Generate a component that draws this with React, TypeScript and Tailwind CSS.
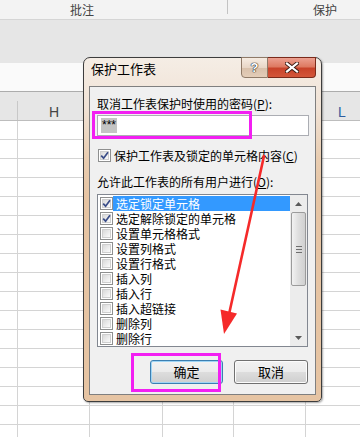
import React from "react";

function Cb({ checked }: { checked?: boolean }) {
  return (
    <span className="relative flex h-[13px] w-[13px] shrink-0 items-center justify-center border border-[#8e8f8f] bg-white">
      <span className="absolute inset-[1px] border border-[#cfcfcf] bg-[linear-gradient(135deg,#d9d9d9,#fbfbfb)]" />
      {checked && (
        <svg className="relative" width="9" height="9" viewBox="0 0 9 9">
          <path d="M1.2 4.6 L3.6 7.2 L8 1.2" stroke="#3a4d88" strokeWidth="1.7" fill="none" />
        </svg>
      )}
    </span>
  );
}

const items = [
  { t: "选定锁定单元格", c: true, s: true },
  { t: "选定解除锁定的单元格", c: true },
  { t: "设置单元格格式" },
  { t: "设置列格式" },
  { t: "设置行格式" },
  { t: "插入列" },
  { t: "插入行" },
  { t: "插入超链接" },
  { t: "删除列" },
  { t: "删除行" },
];

const rows = Array.from({ length: 17 }, (_, i) => i);

export default function App() {
  return (
    <div className='relative h-[437px] w-[360px] overflow-hidden bg-white font-[family-name:"Noto_Sans_CJK_SC",sans-serif] text-[12px] text-black'>
      {/* ribbon group labels */}
      <div className="flex h-[20px] border-b border-[#d5d5d5] bg-[#f3f3f3] text-[#444]">
        <div className="w-[227px] pl-[70px] leading-[19px]">批注</div>
        <div className="h-[14px] w-px bg-[#c3c3c3]" />
        <div className="pl-[85px] leading-[19px]">保护</div>
      </div>
      <div className="h-[43px] bg-[#e6e6e6]" />
      <div className="h-[29px] border-b border-[#acacac] bg-[#fafafa]" />
      {/* column headers */}
      <div className="grid h-[29px] grid-cols-[18px_72px_73px_71px_72px_1fr] border-b border-[#bdbdbd] bg-[#e6e6e6] font-[family-name:'Liberation_Sans',sans-serif] text-[14px] text-[#444]">
        <div className="mt-[9px] border-r border-[#c8c8c8]" />
        <div className="flex items-center justify-center pt-[12px] leading-[14px]">H</div>
        <div />
        <div />
        <div />
        <div className="flex w-[72px] items-center justify-center pt-[12px] leading-[14px] text-[#2f5d9e]">L</div>
      </div>
      {/* grid */}
      <div className="grid grid-cols-[18px_72px_73px_71px_72px_1fr]">
        {rows.map((r) => (
          <React.Fragment key={r}>
            <div className="h-[19px] border-b border-r border-[#d4d4d4]" />
            <div className="h-[19px] border-b border-r border-[#d4d4d4]" />
            <div className="h-[19px] border-b border-r border-[#d4d4d4]" />
            <div className="h-[19px] border-b border-r border-[#d4d4d4]" />
            <div className="h-[19px] border-b border-r border-[#d4d4d4]" />
            <div className="h-[19px] border-b border-[#d4d4d4]" />
          </React.Fragment>
        ))}
      </div>

      {/* dialog window */}
      <div className="absolute left-[83px] top-[57px] flex h-[345px] w-[239px] flex-col rounded-t-[7px] rounded-b-[5px] border border-[#3d3d3d] bg-[linear-gradient(to_bottom,#f5ede5_0px,#f0e2d5_50px,#e9cdb1_100px,#e6c4a3_140px,#e6c4a3_100%)] px-[5px] pb-[6px] shadow-[1px_1px_2px_rgba(0,0,0,0.35)]">
        <div className="flex h-[28px] shrink-0 items-start">
          <div className="pl-[2px] pt-[3px] text-[13px] leading-[16px]">保护工作表</div>
          <div className="-mt-px ml-auto flex">
            <div className="flex h-[21px] w-[27px] items-center justify-center rounded-bl-[4px] border border-[#8f7a68] bg-[linear-gradient(to_bottom,#f6ece2,#e8d6c6_50%,#d8c0aa_51%,#e4cdb8)] font-[family-name:'Liberation_Sans',sans-serif] text-[13px] font-bold text-white [text-shadow:0_0_1px_#222,0_0_1px_#222,0_0_1px_#222]">
              ?
            </div>
            <div className="flex h-[21px] w-[48px] items-center justify-center rounded-br-[4px] border border-l-0 border-[#7a2a1a] bg-[linear-gradient(to_bottom,#eca090,#de7a62_45%,#c8432a_55%,#d3563a)]">
              <svg width="14" height="11" viewBox="0 0 14 11">
                <path d="M2 1.5 L12 9.5 M12 1.5 L2 9.5" stroke="#3a1a12" strokeWidth="4" strokeLinecap="square" />
                <path d="M2 1.5 L12 9.5 M12 1.5 L2 9.5" stroke="#ffffff" strokeWidth="2.2" strokeLinecap="square" />
              </svg>
            </div>
          </div>
        </div>

        {/* content panel */}
        <div className="flex flex-1 flex-col border border-[#7f7f7f] bg-[#f0f0f0] pl-[7px] pr-[7px]">
          <div className="mt-[9px] leading-[15px]">
            取消工作表保护时使用的密码(<span className="underline">P</span>):
          </div>
          <div className="mt-[4px] flex h-[21px] w-[212px] items-center border border-[#abadb3] bg-white pl-[3px]">
            <span className="bg-[#c4c4c4] px-[1px] font-[family-name:'Liberation_Sans',sans-serif] text-[12px] leading-[15px]">***</span>
          </div>
          <div className="mt-[11px] flex h-[16px] items-center gap-[3px] pl-[1px]">
            <Cb checked />
            <span className="leading-[15px]">
              保护工作表及锁定的单元格内容(<span className="underline">C</span>)
            </span>
          </div>
          <div className="mt-[11px] h-[16px] leading-[16px]">
            允许此工作表的所有用户进行(<span className="underline">O</span>):
          </div>
          <div className="mt-[4px] flex h-[153px] w-[211px] border border-[#828790] bg-white">
            <div className="flex flex-1 flex-col pt-px">
              {items.map((it) => (
                <div key={it.t} className="flex h-[15px] items-center overflow-hidden pl-[2px]">
                  <Cb checked={it.c} />
                  <span
                    className={
                      it.s
                        ? "flex h-[15px] flex-1 items-center bg-[#3399ff] pl-[3px] leading-[15px] text-white"
                        : "flex h-[15px] flex-1 items-center pl-[3px] leading-[15px]"
                    }
                  >
                    {it.t}
                  </span>
                </div>
              ))}
            </div>
            {/* scrollbar */}
            <div className="flex w-[17px] flex-col items-center bg-[#ececec] px-[1px]">
              <div className="flex h-[17px] items-center justify-center">
                <svg width="7" height="4" viewBox="0 0 7 4">
                  <path d="M0 4 L3.5 0 L7 4 Z" fill="#5a5a5a" />
                </svg>
              </div>
              <div className="flex h-[74px] w-[15px] flex-col items-center justify-center gap-[2px] rounded-[2px] border border-[#9b9b9b] bg-[linear-gradient(to_right,#f2f2f2,#dedede_50%,#d0d0d0)]">
                <div className="h-px w-[6px] bg-[#6f6f6f]" />
                <div className="h-px w-[6px] bg-[#6f6f6f]" />
                <div className="h-px w-[6px] bg-[#6f6f6f]" />
              </div>
              <div className="flex-1" />
              <div className="flex h-[17px] items-center justify-center">
                <svg width="7" height="4" viewBox="0 0 7 4">
                  <path d="M0 0 L3.5 4 L7 0 Z" fill="#5a5a5a" />
                </svg>
              </div>
            </div>
          </div>
          <div className="mt-[13px] flex justify-end gap-[11px]">
            <button className="flex h-[24px] w-[73px] items-center justify-center rounded-[3px] border border-[#3c7fb1] bg-[linear-gradient(to_bottom,#f2f2f2,#ebebeb_50%,#dddddd_51%,#cfcfcf)] text-[13px] shadow-[inset_0_0_0_1px_#9fd5f5]">
              确定
            </button>
            <button className="flex h-[24px] w-[74px] items-center justify-center rounded-[3px] border border-[#707070] bg-[linear-gradient(to_bottom,#f2f2f2,#ebebeb_50%,#dddddd_51%,#cfcfcf)] text-[13px] shadow-[inset_0_0_0_1px_#fcfcfc]">
              取消
            </button>
          </div>
        </div>
      </div>

      {/* magenta highlight boxes */}
      <div className="pointer-events-none absolute left-[92px] top-[111px] h-[28px] w-[160px] border-[3px] border-[#f21ff2]" />
      <div className="pointer-events-none absolute left-[131px] top-[353px] h-[39px] w-[90px] border-[3px] border-[#f21ff2]" />

      {/* red arrow */}
      <svg className="pointer-events-none absolute left-0 top-0" width="360" height="437" viewBox="0 0 360 437">
        <path d="M264 156 L229.5 312" stroke="#f52a2a" strokeWidth="2.6" strokeLinecap="round" />
        <path d="M224 334 L220.5 309.5 L237 313.5 Z" fill="#f52a2a" />
      </svg>
    </div>
  );
}
